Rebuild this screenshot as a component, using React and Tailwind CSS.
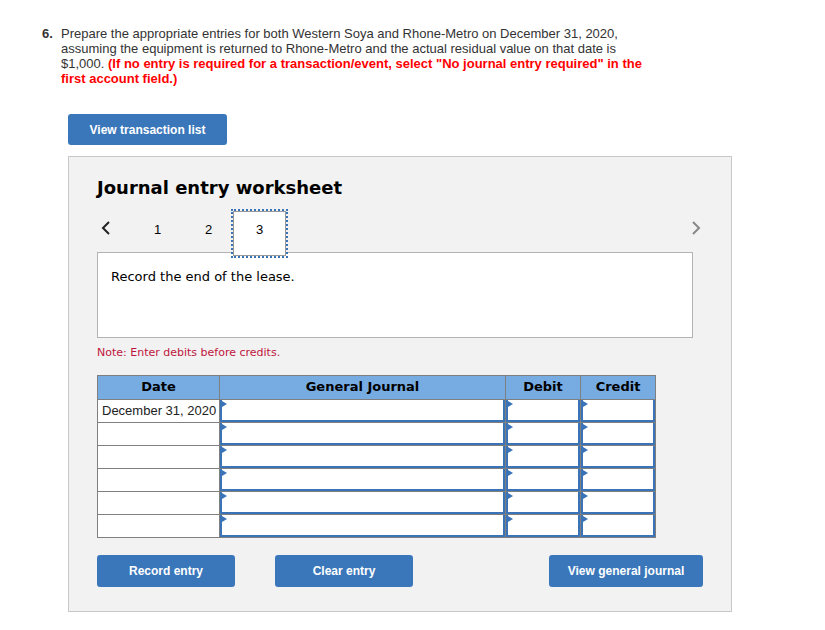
import React from 'react';

const ARIAL = { fontFamily: '"Liberation Sans", Arial, sans-serif' };
const VERD = { fontFamily: '"DejaVu Sans", Verdana, sans-serif' };

const InputCell = ({ w }) => (
  <td className={`${w} h-[23px] p-0 border border-[#7f7f7f] bg-white align-top`}>
    <div className="relative h-[22px] border-2 border-t-0 border-[#3b73b9] border-l-[2px]">
      <span className="absolute left-0 top-[1px] w-0 h-0 border-y-[3px] border-y-transparent border-l-[5px] border-l-[#3b73b9]" />
    </div>
  </td>
);

const rows = ['December 31, 2020', '', '', '', '', ''];

export default function App() {
  return (
    <div className="w-[825px] h-[630px] bg-white text-[12px] text-[#222]" style={ARIAL}>
      {/* question */}
      <div className="flex pl-[42px] pt-[26px] leading-[15px] text-[13px]">
        <span className="w-[19px] font-bold text-[#333]">6.</span>
        <p className="flex-1 text-[#333] whitespace-nowrap">
          Prepare the appropriate entries for both Western Soya and Rhone-Metro on December 31, 2020,<br />
          assuming the equipment is returned to Rhone-Metro and the actual residual value on that date is<br />
          $1,000. <span className="font-bold text-[#ff0000]">(If no entry is required for a transaction/event, select "No journal entry required" in the<br />
          first account field.)</span>
        </p>
      </div>

      <div className="ml-[68px] mt-[28px]">
        <button className="w-[159px] h-[31px] rounded-[3px] bg-[#3a77ba] text-white font-bold text-[12px]">
          View transaction list
        </button>
      </div>

      {/* worksheet panel */}
      <div className="ml-[68px] mt-[11px] w-[664px] h-[456px] bg-[#f2f2f2] border border-[#c8c8c8] pl-[28px] pr-[28px]">
        <h2 className="mt-[20px] text-[18px] font-bold text-black leading-[22px]" style={VERD}>Journal entry worksheet</h2>

        <div className="relative flex items-end h-[45px] mt-[12px] text-[13px] text-black">
          <svg className="absolute left-[4px] top-[10px]" width="10" height="14" viewBox="0 0 10 14">
            <path d="M8 1 L2 7 L8 13" stroke="#222" strokeWidth="2" fill="none" />
          </svg>
          <span className="absolute left-[57px] top-[9px]">1</span>
          <span className="absolute left-[108px] top-[9px]">2</span>
          <div className="absolute left-[136px] top-0 w-[53px] h-[45px] bg-white border border-[#999] outline-2 outline-dotted outline-[#3b73b9] flex justify-center pt-[8px] z-10">
            3
          </div>
          <svg className="absolute right-[2px] top-[10px]" width="10" height="14" viewBox="0 0 10 14">
            <path d="M2 1 L8 7 L2 13" stroke="#888" strokeWidth="2" fill="none" />
          </svg>
        </div>

        <div className="w-[596px] h-[86px] -mt-[4px] bg-white border border-[#b3b3b3] px-[13px] pt-[14px] text-[13px] text-black" style={VERD}>
          Record the end of the lease.
        </div>

        <p className="mt-[7px] text-[11px] text-[#c0143c]" style={VERD}>Note: Enter debits before credits.</p>

        <table className="mt-[13px] border-collapse text-[13px]">
          <thead>
            <tr className="bg-[#77ace3] h-[24px] text-black font-bold" style={VERD}>
              <th className="w-[122px] border border-[#7f7f7f] font-bold">Date</th>
              <th className="w-[286px] border border-[#7f7f7f] font-bold">General Journal</th>
              <th className="w-[75px] border border-[#7f7f7f] font-bold">Debit</th>
              <th className="w-[75px] border border-[#7f7f7f] font-bold">Credit</th>
            </tr>
          </thead>
          <tbody>
            {rows.map((d, i) => (
              <tr key={i}>
                <td className="h-[23px] p-0 pl-[4px] border border-[#7f7f7f] bg-white text-[#222] whitespace-nowrap">{d}</td>
                <InputCell w="w-[286px]" />
                <InputCell w="w-[75px]" />
                <InputCell w="w-[75px]" />
              </tr>
            ))}
          </tbody>
        </table>

        <div className="flex mt-[17px]">
          <button className="w-[138px] h-[32px] rounded-[3px] bg-[#3a77ba] text-white font-bold text-[12px]">Record entry</button>
          <button className="ml-[40px] w-[138px] h-[32px] rounded-[3px] bg-[#3a77ba] text-white font-bold text-[12px]">Clear entry</button>
          <button className="ml-auto w-[154px] h-[32px] rounded-[3px] bg-[#3a77ba] text-white font-bold text-[12px]">View general journal</button>
        </div>
      </div>
    </div>
  );
}
